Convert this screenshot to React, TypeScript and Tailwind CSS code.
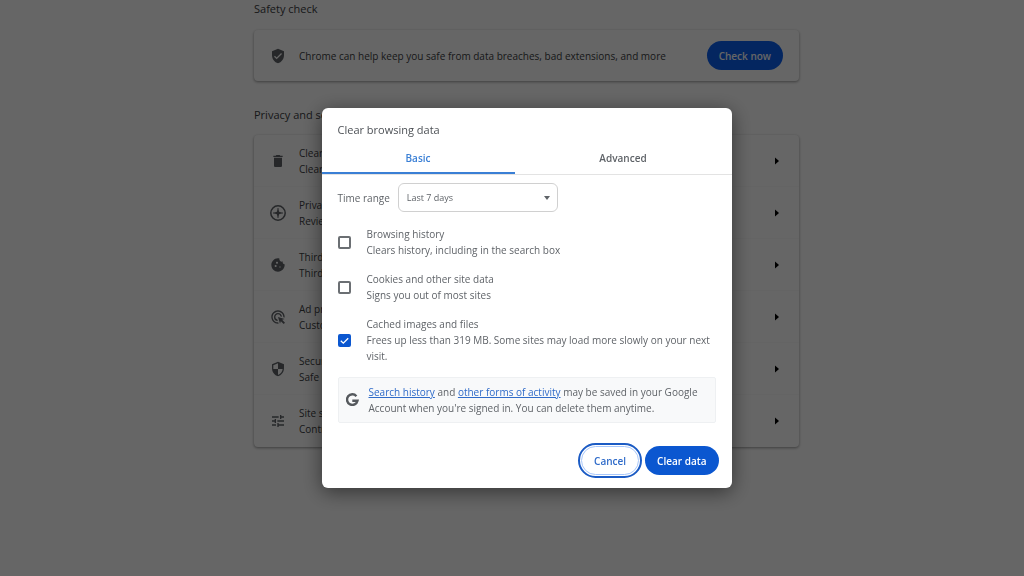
import { useState } from 'react'
import type { ReactNode } from 'react'
import { MdAdsClick, MdCookie, MdDelete, MdSecurity, MdTune, MdVerifiedUser } from 'react-icons/md'

interface SettingsRow {
  title: string
  detail: string
  icon: ReactNode
}

function PrivacyGuideIcon() {
  return (
    <svg viewBox="0 0 18 18" className="size-[18px] shrink-0" fill="none" stroke="currentColor">
      <circle cx="9" cy="9" r="7.2" strokeWidth="1.5" />
      <path d="M9 4v10M4 9h10" strokeWidth="1" />
      <path d="M9 5l1.2 2.8L13 9l-2.8 1.2L9 13l-1.2-2.8L5 9l2.8-1.2z" fill="currentColor" stroke="none" />
    </svg>
  )
}

const rows: SettingsRow[] = [
  {
    title: 'Clear browsing data',
    detail: 'Clear history, cookies, cache, and more',
    icon: <MdDelete size={16} />,
  },
  {
    title: 'Privacy Guide',
    detail: 'Review key privacy and security controls',
    icon: <PrivacyGuideIcon />,
  },
  {
    title: 'Third-party cookies',
    detail: 'Third-party cookies are blocked in Incognito mode',
    icon: <MdCookie size={16} />,
  },
  {
    title: 'Ad privacy',
    detail: 'Customize the info used by sites to show you ads',
    icon: <MdAdsClick size={16} />,
  },
  {
    title: 'Security',
    detail: 'Safe Browsing and other security settings',
    icon: <MdSecurity size={16} />,
  },
  {
    title: 'Site settings',
    detail: 'Controls what information sites can use and show',
    icon: <MdTune size={16} />,
  },
]

const options = [
  {
    id: 'history',
    title: 'Browsing history',
    detail: 'Clears history, including in the search box',
  },
  {
    id: 'cookies',
    title: 'Cookies and other site data',
    detail: 'Signs you out of most sites',
  },
  {
    id: 'cache',
    title: 'Cached images and files',
    detail: 'Frees up less than 319 MB. Some sites may load more slowly on your next visit.',
  },
]

function SettingsPage() {
  return (
    <main className="mx-auto w-full max-w-[545px]">
      <h2 className="text-[11px] leading-[18px]">Safety check</h2>
      <section className="mt-3 flex h-[51px] items-center rounded bg-white px-4 shadow-[0_1px_3px_rgba(0,0,0,0.4)]">
        <span className="flex w-[29px] text-[#5f6368]">
          <MdVerifiedUser size={16} />
        </span>
        <p className="flex-1">Chrome can help keep you safe from data breaches, bad extensions, and more</p>
        <button className="h-[29px] rounded-full bg-[#0b5ff0] px-3 font-semibold text-white">Check now</button>
      </section>

      <h2 className="mt-[25px] text-[11px] leading-[18px]">Privacy and security</h2>
      <section className="mt-[11px] rounded bg-white shadow-[0_1px_3px_rgba(0,0,0,0.4)]">
        {rows.map((row) => (
          <button
            key={row.title}
            className="flex h-[52px] w-full items-center border-b border-[#fafafa] px-4 text-left last:border-b-0"
          >
            <span className="mr-[13px] flex w-4 justify-center text-[#5f6368]">{row.icon}</span>
            <span className="flex-1">
              <span className="block">{row.title}</span>
              <span className="block">{row.detail}</span>
            </span>
            <svg viewBox="0 0 4 8" className="mr-1 h-2 w-1" fill="#000">
              <path d="M0 0.5l4 3.5-4 3.5z" />
            </svg>
          </button>
        ))}
      </section>
    </main>
  )
}

function ClearDataDialog() {
  const [tab, setTab] = useState('Basic')
  const [range, setRange] = useState('Last 7 days')
  const [checked, setChecked] = useState<string[]>(['cache'])

  const toggle = (id: string) => {
    setChecked(checked.includes(id) ? checked.filter((c) => c !== id) : [...checked, id])
  }

  return (
    <div
      role="dialog"
      aria-labelledby="dialog-title"
      className="w-full max-w-[410px] overflow-hidden rounded-md bg-white text-[#5f6368] shadow-[0_4px_20px_rgba(0,0,0,0.5)]"
    >
      <h1 id="dialog-title" className="px-4 pt-[13px] text-[11px] leading-[18px] text-[#4d5156]">
        Clear browsing data
      </h1>

      <div role="tablist" className="mt-1 grid h-8 grid-cols-[193fr_217fr] border-b border-[#e3e3e3] font-semibold">
        {['Basic', 'Advanced'].map((name) => (
          <button
            key={name}
            role="tab"
            aria-selected={tab === name}
            onClick={() => setTab(name)}
            className="border-b-2 border-transparent aria-selected:border-[#3a7fd5] aria-selected:text-[#3a7fd5]"
          >
            {name}
          </button>
        ))}
      </div>

      <div className="px-4">
        <div className="mt-2 flex items-center gap-2">
          <label htmlFor="range">Time range</label>
          <div className="grid w-40 items-center">
            <select
              id="range"
              value={range}
              onChange={(e) => setRange(e.target.value)}
              className="col-start-1 row-start-1 h-[29px] appearance-none rounded-md border border-[#d0d0d0] bg-white px-2 text-[9px]"
            >
              <option>Last hour</option>
              <option>Last 24 hours</option>
              <option>Last 7 days</option>
              <option>Last 4 weeks</option>
              <option>All time</option>
            </select>
            <svg viewBox="0 0 6 4" className="pointer-events-none col-start-1 row-start-1 mr-2 h-1 w-1.5 justify-self-end" fill="#5f6368">
              <path d="M0 0h6L3 4z" />
            </svg>
          </div>
        </div>

        <div className="mt-[14px] flex flex-col gap-[13px]">
          {options.map((option) => (
            <label key={option.id} htmlFor={option.id} className="flex items-center gap-4">
              <span className="grid size-[13px] shrink-0">
                <input
                  id={option.id}
                  type="checkbox"
                  checked={checked.includes(option.id)}
                  onChange={() => toggle(option.id)}
                  className="peer col-start-1 row-start-1 size-[13px] appearance-none rounded-xs border-2 border-[#6b6f73] checked:border-[#0b57d0] checked:bg-[#0b57d0]"
                />
                <svg
                  viewBox="0 0 13 13"
                  className="pointer-events-none invisible col-start-1 row-start-1 size-[13px] peer-checked:visible"
                  fill="none"
                  stroke="#fff"
                  strokeWidth="1.3"
                >
                  <path d="M2.8 6.8l2.5 2.4 4.9-5" />
                </svg>
              </span>
              <span>
                <span className="block">{option.title}</span>
                <span className="block">{option.detail}</span>
              </span>
            </label>
          ))}
        </div>

        <div className="mt-[13px] flex items-center gap-2 rounded-xs border border-[#eef0f2] bg-[#f8f9fa] px-1.5 py-1.5">
          <svg viewBox="0 0 16 16" className="size-4 shrink-0" fill="none" stroke="#55595d" strokeWidth="2.4">
            <path d="M11.4 4.200A5.300 5.300 0 1 0 12.500 8.700H7.300" />
          </svg>
          <p>
            <a href="#history" className="text-[#2f6bc9] underline">
              Search history
            </a>{' '}
            and{' '}
            <a href="#activity" className="text-[#2f6bc9] underline">
              other forms of activity
            </a>{' '}
            may be saved in your Google Account when you're signed in. You can delete them anytime.
          </p>
        </div>
      </div>

      <div className="flex justify-end gap-1.5 pt-[23px] pr-[13px] pb-[13px] font-semibold">
        <button className="h-[29px] rounded-full border border-[#a8c7fa] px-3 text-[#2f6bc9] outline-2 outline-offset-1 outline-[#1b5bc4]">
          Cancel
        </button>
        <button className="h-[29px] rounded-full bg-[#0b57d0] px-3 text-white">Clear data</button>
      </div>
    </div>
  )
}

export default function App() {
  return (
    <div className="min-h-screen bg-white pl-[29px] font-['Open_Sans','Noto_Sans',sans-serif] text-[10px] leading-4 text-[#3c4043]">
      <SettingsPage />
      <div className="fixed inset-0 flex items-start justify-center overflow-y-auto bg-black/60 pt-[108px] pl-[29px]">
        <ClearDataDialog />
      </div>
    </div>
  )
}
